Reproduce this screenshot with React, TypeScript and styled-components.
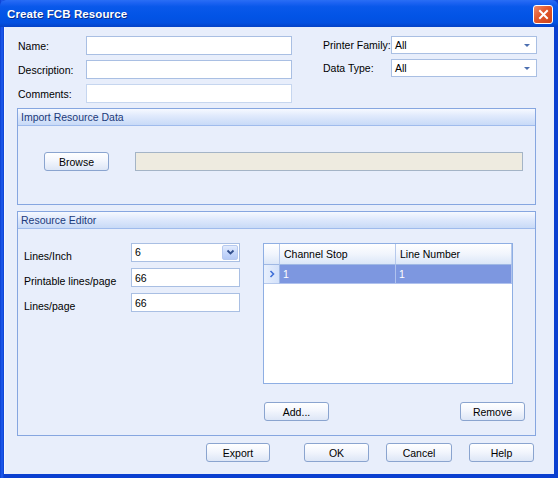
import React from "react";
import styled, { createGlobalStyle } from "styled-components";

const GlobalStyle = createGlobalStyle`
  html, body {
    margin: 0;
    padding: 0;
    background: #ffffff;
  }
  * {
    box-sizing: border-box;
  }
`;

const Frame = styled.div`
  width: 558px;
  height: 478px;
  display: flex;
  flex-direction: column;
  background: linear-gradient(to right, #0a3fd0 0px, #1e5cf0 2px, #0a3fd0 4px);
  background-color: #0b48d8;
  font-family: "Liberation Sans", Arial, sans-serif;
  font-size: 10.5px;
  color: #000;
  overflow: hidden;
`;

const TitleBar = styled.div`
  height: 27px;
  flex: none;
  display: flex;
  align-items: center;
  justify-content: space-between;
  padding: 0 5px 0 7px;
  background: linear-gradient(
    to bottom,
    #2a6ef5 0%,
    #1d63f2 10%,
    #0958ea 25%,
    #0254e6 60%,
    #0350e0 85%,
    #0442c6 100%
  );
  border-radius: 6px 6px 0 0;
`;

const Caption = styled.span`
  color: #ffffff;
  font-weight: bold;
  font-size: 11.5px;
  letter-spacing: 0.1px;
  text-shadow: 1px 1px 0 #0a2d8a;
`;

const CloseButton = styled.div`
  width: 20px;
  height: 19px;
  margin-top: 1px;
  border: 1px solid #ffffff;
  border-radius: 3px;
  background: linear-gradient(135deg, #f08a6a 0%, #e2572c 45%, #cc4419 100%);
  display: flex;
  align-items: center;
  justify-content: center;
`;

const Body = styled.div`
  flex: 1;
  margin: 0 4px 4px 4px;
  background: #e8eefb;
  border-left: 1px solid #f4f7ff;
  padding: 9px 0 0 12px;
  display: flex;
  flex-direction: column;
`;

const TopSection = styled.div`
  display: flex;
  padding-left: 1px;
`;

const FieldColumn = styled.div<{ $labelWidth: number; $fieldWidth: number; $gap: number }>`
  display: grid;
  grid-template-columns: ${(p) => p.$labelWidth}px ${(p) => p.$fieldWidth}px;
  row-gap: ${(p) => p.$gap}px;
  align-items: center;
`;

const Label = styled.label<{ $offset?: number }>`
  color: #000;
  white-space: nowrap;
  padding-top: ${(p) => p.$offset ?? 0}px;
`;

const TextBox = styled.div<{ $height?: number; $pale?: boolean }>`
  height: ${(p) => p.$height ?? 19}px;
  background: #ffffff;
  border: 1px solid ${(p) => (p.$pale ? "#c6d6ef" : "#a9bfe3")};
  padding: 0 3px;
  display: flex;
  align-items: center;
`;

const FlatSelect = styled.div`
  height: 18px;
  background: #ffffff;
  border: 1px solid #a9bfe3;
  padding: 0 3px;
  display: flex;
  align-items: center;
  justify-content: space-between;
`;

const SmallArrow = styled.span`
  width: 0;
  height: 0;
  margin-right: 3px;
  border-left: 3px solid transparent;
  border-right: 3px solid transparent;
  border-top: 3px solid #4c6fb0;
`;

const Group = styled.div<{ $height: number; $gapTop: number }>`
  width: 519px;
  height: ${(p) => p.$height}px;
  margin-top: ${(p) => p.$gapTop}px;
  border: 1px solid #86a6e0;
  display: flex;
  flex-direction: column;
`;

const GroupHeader = styled.div`
  height: 17px;
  flex: none;
  padding-left: 3px;
  display: flex;
  align-items: center;
  color: #1b3a7a;
  background: linear-gradient(to bottom, #f6f9ff 0%, #dfe9fc 45%, #c8daf7 100%);
  border-bottom: 1px solid #9fbbec;
`;

const ImportBody = styled.div`
  display: flex;
  align-items: center;
  padding: 26px 0 0 26px;
`;

const Button = styled.div<{ $width?: number }>`
  width: ${(p) => p.$width ?? 65}px;
  height: 19px;
  border: 1px solid #8aa4cf;
  border-radius: 3px;
  background: linear-gradient(to bottom, #ffffff 0%, #f3f6fd 45%, #dde6f6 100%);
  display: flex;
  align-items: center;
  justify-content: center;
  color: #000;
  flex: none;
`;

const PathField = styled.div`
  width: 388px;
  height: 19px;
  margin-left: 26px;
  background: #eeebe0;
  border: 1px solid #a4b4c6;
`;

const EditorBody = styled.div`
  display: flex;
  padding: 13px 0 0 6px;
`;

const Combo = styled.div`
  height: 19px;
  background: #ffffff;
  border: 1px solid #a9bfe3;
  padding: 0 1px 0 3px;
  display: flex;
  align-items: center;
  justify-content: space-between;
`;

const ComboButton = styled.div`
  width: 16px;
  height: 15px;
  border: 1px solid #b6c9ef;
  border-radius: 2px;
  background: linear-gradient(to bottom, #e3ecfd 0%, #c7d8fb 50%, #b5caf6 100%);
  display: flex;
  align-items: center;
  justify-content: center;
`;

const GridColumn = styled.div`
  display: flex;
  flex-direction: column;
  margin-left: 23px;
  padding-top: 1px;
`;

const DataGrid = styled.div`
  width: 250px;
  height: 141px;
  background: #ffffff;
  border: 1px solid #8eaee3;
  display: flex;
  flex-direction: column;
`;

const GridRow = styled.div<{ $height: number }>`
  display: grid;
  grid-template-columns: 16px 116px 1fr;
  height: ${(p) => p.$height}px;
`;

const HeaderCell = styled.div`
  display: flex;
  align-items: center;
  padding-left: 4px;
  background: linear-gradient(to bottom, #ffffff 0%, #f1f5fd 50%, #dbe6f8 100%);
  border-right: 1px solid #b6c9ec;
  border-bottom: 1px solid #9fb8e4;
  color: #000;
`;

const RowHeaderCell = styled.div`
  display: flex;
  align-items: center;
  justify-content: center;
  background: linear-gradient(to right, #e8f0fd, #d3e1fa);
  border-right: 1px solid #9fb8e4;
  border-bottom: 1px solid #b6c9ec;
`;

const SelectedCell = styled.div`
  display: flex;
  align-items: center;
  padding-left: 3px;
  background: #7d97e0;
  color: #ffffff;
  border-right: 1px solid #b0c2ee;
  border-bottom: 1px solid #b0c2ee;
`;

const GridButtons = styled.div`
  display: flex;
  justify-content: space-between;
  width: 262px;
  margin-top: 18px;
  padding-left: 1px;
`;

const FooterButtons = styled.div`
  display: flex;
  align-items: center;
  margin: 7px 0 0 189px;
`;

const FooterSpacer = styled.div<{ $width: number }>`
  width: ${(p) => p.$width}px;
  flex: none;
`;

const App: React.FC = () => {
  return (
    <>
      <GlobalStyle />
      <Frame>
        <TitleBar>
          <Caption>Create FCB Resource</Caption>
          <CloseButton>
            <svg width="11" height="11" viewBox="0 0 11 11">
              <path d="M2 2 L9 9 M9 2 L2 9" stroke="#ffffff" strokeWidth="2" strokeLinecap="square" />
            </svg>
          </CloseButton>
        </TitleBar>
        <Body>
          <TopSection>
            <FieldColumn $labelWidth={68} $fieldWidth={206} $gap={5}>
              <Label $offset={1}>Name:</Label>
              <TextBox $height={19} />
              <Label $offset={1}>Description:</Label>
              <TextBox $height={19} />
              <Label $offset={1}>Comments:</Label>
              <TextBox $height={19} $pale />
            </FieldColumn>
            <FieldColumn
              $labelWidth={68}
              $fieldWidth={146}
              $gap={5}
              style={{ marginLeft: 31, alignSelf: "flex-start" }}
            >
              <Label>Printer Family:</Label>
              <FlatSelect>
                <span>All</span>
                <SmallArrow />
              </FlatSelect>
              <Label>Data Type:</Label>
              <FlatSelect>
                <span>All</span>
                <SmallArrow />
              </FlatSelect>
            </FieldColumn>
          </TopSection>

          <Group $height={97} $gapTop={5}>
            <GroupHeader>Import Resource Data</GroupHeader>
            <ImportBody>
              <Button>Browse</Button>
              <PathField />
            </ImportBody>
          </Group>

          <Group $height={225} $gapTop={6}>
            <GroupHeader>Resource Editor</GroupHeader>
            <EditorBody>
              <FieldColumn $labelWidth={107} $fieldWidth={109} $gap={6} style={{ alignSelf: "flex-start" }}>
                <Label $offset={8}>Lines/Inch</Label>
                <Combo>
                  <span>6</span>
                  <ComboButton>
                    <svg width="9" height="7" viewBox="0 0 9 7">
                      <path d="M1.5 1.5 L4.5 4.5 L7.5 1.5" fill="none" stroke="#33508e" strokeWidth="1.8" />
                    </svg>
                  </ComboButton>
                </Combo>
                <Label $offset={6}>Printable lines/page</Label>
                <TextBox>66</TextBox>
                <Label $offset={6}>Lines/page</Label>
                <TextBox>66</TextBox>
              </FieldColumn>
              <GridColumn>
                <DataGrid>
                  <GridRow $height={21}>
                    <HeaderCell />
                    <HeaderCell>Channel Stop</HeaderCell>
                    <HeaderCell>Line Number</HeaderCell>
                  </GridRow>
                  <GridRow $height={19}>
                    <RowHeaderCell>
                      <svg width="6" height="8" viewBox="0 0 6 8">
                        <path d="M1.5 1 L4.5 4 L1.5 7" fill="none" stroke="#3f6fd8" strokeWidth="1.6" />
                      </svg>
                    </RowHeaderCell>
                    <SelectedCell>1</SelectedCell>
                    <SelectedCell>1</SelectedCell>
                  </GridRow>
                </DataGrid>
                <GridButtons>
                  <Button>Add...</Button>
                  <Button>Remove</Button>
                </GridButtons>
              </GridColumn>
            </EditorBody>
          </Group>

          <FooterButtons>
            <Button $width={64}>Export</Button>
            <FooterSpacer $width={34} />
            <Button>OK</Button>
            <FooterSpacer $width={17} />
            <Button $width={66}>Cancel</Button>
            <FooterSpacer $width={17} />
            <Button>Help</Button>
          </FooterButtons>
        </Body>
      </Frame>
    </>
  );
};

export default App;
